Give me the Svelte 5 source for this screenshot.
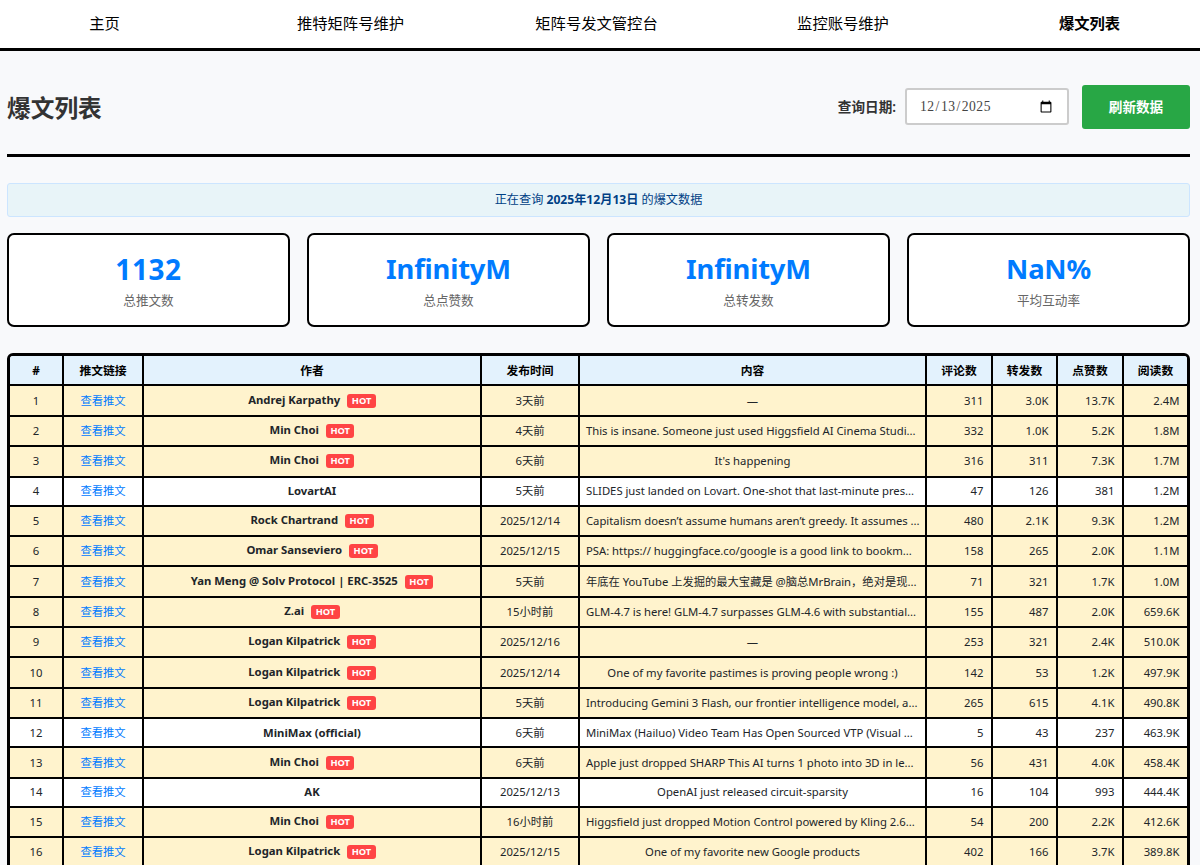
<script lang="ts">
	interface Post {
		author: string;
		hot: boolean;
		time: string;
		content: string;
		replies: string;
		reposts: string;
		likes: string;
		views: string;
	}

	const navItems = ['主页', '推特矩阵号维护', '矩阵号发文管控台', '监控账号维护', '爆文列表'];
	const columns = ['#', '推文链接', '作者', '发布时间', '内容', '评论数', '转发数', '点赞数', '阅读数'];

	const stats = [
		{ value: '1132', label: '总推文数' },
		{ value: 'InfinityM', label: '总点赞数' },
		{ value: 'InfinityM', label: '总转发数' },
		{ value: 'NaN%', label: '平均互动率' }
	];

	function post(
		author: string,
		hot: boolean,
		time: string,
		content: string,
		counts: string
	): Post {
		const [replies, reposts, likes, views] = counts.split(' ');
		return { author, hot, time, content, replies, reposts, likes, views };
	}

	const posts: Post[] = [
		post('Andrej Karpathy', true, '3天前', '—', '311 3.0K 13.7K 2.4M'),
		post('Min Choi', true, '4天前', 'This is insane. Someone just used Higgsfield AI Cinema Studi...', '332 1.0K 5.2K 1.8M'),
		post('Min Choi', true, '6天前', "It's happening", '316 311 7.3K 1.7M'),
		post('LovartAI', false, '5天前', 'SLIDES just landed on Lovart. One-shot that last-minute pres...', '47 126 381 1.2M'),
		post('Rock Chartrand', true, '2025/12/14', 'Capitalism doesn’t assume humans aren’t greedy. It assumes ...', '480 2.1K 9.3K 1.2M'),
		post('Omar Sanseviero', true, '2025/12/15', 'PSA: https:// huggingface.co/google is a good link to bookm...', '158 265 2.0K 1.1M'),
		post('Yan Meng @ Solv Protocol | ERC-3525', true, '5天前', '年底在 YouTube 上发掘的最大宝藏是 @脑总MrBrain，绝对是现...', '71 321 1.7K 1.0M'),
		post('Z.ai', true, '15小时前', 'GLM-4.7 is here! GLM-4.7 surpasses GLM-4.6 with substantial...', '155 487 2.0K 659.6K'),
		post('Logan Kilpatrick', true, '2025/12/16', '—', '253 321 2.4K 510.0K'),
		post('Logan Kilpatrick', true, '2025/12/14', 'One of my favorite pastimes is proving people wrong :)', '142 53 1.2K 497.9K'),
		post('Logan Kilpatrick', true, '5天前', 'Introducing Gemini 3 Flash, our frontier intelligence model, a...', '265 615 4.1K 490.8K'),
		post('MiniMax (official)', false, '6天前', 'MiniMax (Hailuo) Video Team Has Open Sourced VTP (Visual ...', '5 43 237 463.9K'),
		post('Min Choi', true, '6天前', 'Apple just dropped SHARP This AI turns 1 photo into 3D in le...', '56 431 4.0K 458.4K'),
		post('AK', false, '2025/12/13', 'OpenAI just released circuit-sparsity', '16 104 993 444.4K'),
		post('Min Choi', true, '16小时前', 'Higgsfield just dropped Motion Control powered by Kling 2.6...', '54 200 2.2K 412.6K'),
		post('Logan Kilpatrick', true, '2025/12/15', 'One of my favorite new Google products', '402 166 3.7K 389.8K')
	];

	let queryDate = $state('2025-12-13');
	let activeItem = $state('爆文列表');
</script>

<div class="page">
	<nav class="nav">
		{#each navItems as item}
			<button class="nav-item" class:active={item === activeItem} onclick={() => (activeItem = item)}>
				{item}
			</button>
		{/each}
	</nav>

	<main class="main">
		<header class="header">
			<h1>爆文列表</h1>
			<div class="controls">
				<label for="query-date">查询日期:</label>
				<input id="query-date" type="date" bind:value={queryDate} />
				<button class="refresh">刷新数据</button>
			</div>
		</header>

		<div class="notice">正在查询 <strong>2025年12月13日</strong> 的爆文数据</div>

		<section class="stats">
			{#each stats as stat}
				<div class="stat-card">
					<div class="stat-value" class:count={/^\d+$/.test(stat.value)}>{stat.value}</div>
					<div class="stat-label">{stat.label}</div>
				</div>
			{/each}
		</section>

		<div class="table">
			<div class="row head">
				{#each columns as column}
					<div class="cell">{column}</div>
				{/each}
			</div>
			{#each posts as item, i}
				<div class="row" class:hot={item.hot}>
					<div class="cell">{i + 1}</div>
					<div class="cell link">查看推文</div>
					<div class="cell author">
						<span class="name">{item.author}</span>
						{#if item.hot}<span class="badge">HOT</span>{/if}
					</div>
					<div class="cell">{item.time}</div>
					<div class="cell content" class:cut={item.content.endsWith('...')}>{item.content}</div>
					<div class="cell num">{item.replies}</div>
					<div class="cell num">{item.reposts}</div>
					<div class="cell num">{item.likes}</div>
					<div class="cell num">{item.views}</div>
				</div>
			{/each}
		</div>
	</main>
</div>

<style>
	:global(body) {
		background: #f8f9fa;
	}

	.page {
		height: 865px;
		overflow: hidden;
		color: #212529;
		background: #f8f9fb;
		font-family: 'Noto Sans', 'Noto Sans CJK SC', sans-serif;
		font-size: 12px;
	}

	.page * {
		box-sizing: border-box;
	}

	button {
		font-family: inherit;
		border: none;
		padding: 0;
		cursor: pointer;
	}

	.nav {
		display: grid;
		grid-template-columns: 209px 283px 209px 284px 209px;
		height: 51px;
		background: #fff;
		border-bottom: 3px solid #000;
	}

	.nav-item {
		padding-bottom: 4px;
		background: none;
		color: #000;
		font-size: 15.3px;
	}

	.nav-item.active {
		font-weight: 700;
	}

	.main {
		padding: 33px 10px 0 7px;
	}

	.header {
		display: flex;
		justify-content: space-between;
		height: 73px;
		border-bottom: 3px solid #000;
	}

	h1 {
		margin: 0;
		color: #333;
		font-size: 23.7px;
		line-height: 48px;
	}

	.controls {
		display: flex;
		align-items: center;
		height: 45px;
	}

	label {
		margin-right: 9px;
		padding-bottom: 2px;
		color: #333;
		font-size: 13.6px;
		font-weight: 600;
	}

	input {
		width: 164px;
		height: 37px;
		margin-right: 13px;
		padding: 0 12px;
		border: 2px solid #ccc;
		border-radius: 3px;
		background: #fff;
		color: #444;
		font-family: 'Liberation Serif', serif;
		font-size: 13.6px;
		letter-spacing: 0.5px;
	}

	.refresh {
		width: 108px;
		height: 44px;
		padding-bottom: 1px;
		border-radius: 3px;
		background: #28a745;
		color: #fff;
		font-size: 13.6px;
		font-weight: 700;
	}

	.notice {
		height: 34px;
		margin: 26px 0 16px;
		border: 1px solid #cce5ff;
		border-radius: 3px;
		background: #e8f4f8;
		color: #004085;
		font-size: 12.15px;
		line-height: 32px;
		text-align: center;
	}

	.stats {
		display: grid;
		grid-template-columns: repeat(4, 1fr);
		gap: 17px;
		margin-bottom: 26px;
	}

	.stat-card {
		height: 94px;
		padding-top: 15px;
		border: 2px solid #000;
		border-radius: 7px;
		background: #fff;
		text-align: center;
	}

	.stat-value {
		color: #007bff;
		font-size: 27.4px;
		font-weight: 700;
		line-height: 38px;
		letter-spacing: -0.2px;
	}

	.stat-value.count {
		font-size: 28px;
		letter-spacing: 0.6px;
	}

	.stat-label {
		margin-top: 4px;
		color: #666;
		font-size: 12.6px;
		line-height: 18px;
	}

	.table {
		border: 3px solid #000;
		border-radius: 6px;
		overflow: hidden;
	}

	.row {
		display: grid;
		grid-template-columns: 54px 80px 338px 98px 347px 66px 65px 66px 1fr;
		height: 29.1px;
		border-bottom: 2px solid #000;
		background: #fff;
	}

	.row.hot {
		height: 30.38px;
		background: #fff3cd;
	}

	.row.head {
		height: 30.4px;
		background: #e3f2fd;
		color: #000;
		font-weight: 700;
	}

	.cell {
		display: flex;
		align-items: center;
		justify-content: center;
		min-width: 0;
		border-right: 2px solid #000;
		font-size: 11.3px;
		line-height: 16px;
		white-space: nowrap;
	}

	.head .cell {
		padding-bottom: 1px;
		font-size: 11.8px;
	}

	.cell:last-child {
		border-right: none;
	}

	.link {
		color: #007bff;
	}

	.author {
		gap: 7px;
		font-size: 11.3px;
		font-weight: 700;
	}

	.hot .name {
		padding-bottom: 2px;
	}

	.badge {
		padding: 0 4.5px;
		border-radius: 3px;
		background: #ff4444;
		color: #fff;
		font-size: 9.3px;
		line-height: 14px;
	}

	.content.cut {
		justify-content: flex-start;
		padding-left: 6px;
		letter-spacing: -0.02px;
	}

	.num {
		justify-content: flex-end;
		padding-right: 7.5px;
	}
</style>
